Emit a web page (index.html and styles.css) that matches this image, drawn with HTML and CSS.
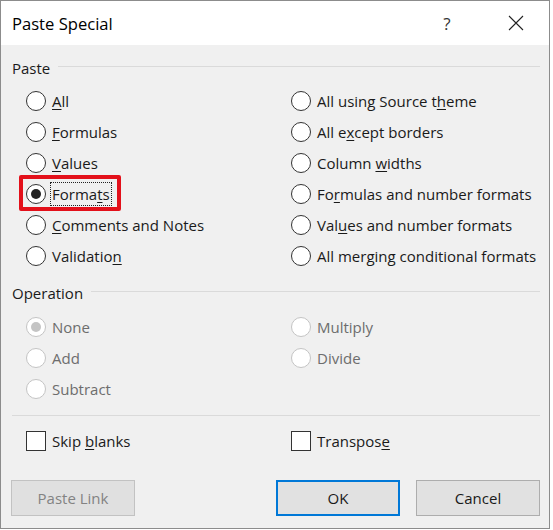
FILE: index.html
```html
<!DOCTYPE html>
<html>
<head>
<meta charset="utf-8">
<link rel="stylesheet" href="styles.css">
</head>
<body>
<div class="dialog">
  <div class="titlebar">
    <div class="title">Paste Special</div>
    <div class="help">?</div>
    <div class="close">
      <svg width="16" height="16" viewBox="0 0 16 16"><path d="M1 1 L15 15 M15 1 L1 15" stroke="#222" stroke-width="1.1" fill="none"/></svg>
    </div>
  </div>
  <div class="content">
    <div class="group-head"><span class="group-label">Paste</span><span class="group-line"></span></div>
    <div class="options">
      <div class="opt"><span class="radio"></span><span class="lbl"><u>A</u>ll</span></div>
      <div class="opt"><span class="radio"></span><span class="lbl">All using Source t<u>h</u>eme</span></div>
      <div class="opt"><span class="radio"></span><span class="lbl"><u>F</u>ormulas</span></div>
      <div class="opt"><span class="radio"></span><span class="lbl">All e<u>x</u>cept borders</span></div>
      <div class="opt"><span class="radio"></span><span class="lbl"><u>V</u>alues</span></div>
      <div class="opt"><span class="radio"></span><span class="lbl">Column <u>w</u>idths</span></div>
      <div class="opt highlight"><span class="radio checked"></span><span class="lbl focus">Forma<u>t</u>s</span></div>
      <div class="opt"><span class="radio"></span><span class="lbl">Fo<u>r</u>mulas and number formats</span></div>
      <div class="opt"><span class="radio"></span><span class="lbl"><u>C</u>omments and Notes</span></div>
      <div class="opt"><span class="radio"></span><span class="lbl">Val<u>u</u>es and number formats</span></div>
      <div class="opt"><span class="radio"></span><span class="lbl">Validatio<u>n</u></span></div>
      <div class="opt"><span class="radio"></span><span class="lbl">All mer<u>g</u>ing conditional formats</span></div>
    </div>
    <div class="group-head op-head"><span class="group-label">Operation</span><span class="group-line"></span></div>
    <div class="options disabled">
      <div class="opt"><span class="radio checked"></span><span class="lbl">None</span></div>
      <div class="opt"><span class="radio"></span><span class="lbl">Multiply</span></div>
      <div class="opt"><span class="radio"></span><span class="lbl">Add</span></div>
      <div class="opt"><span class="radio"></span><span class="lbl">Divide</span></div>
      <div class="opt"><span class="radio"></span><span class="lbl">Subtract</span></div>
    </div>
    <div class="separator"></div>
    <div class="options checks">
      <div class="opt"><span class="check"></span><span class="lbl">Skip <u>b</u>lanks</span></div>
      <div class="opt"><span class="check"></span><span class="lbl">Transpos<u>e</u></span></div>
    </div>
    <div class="buttons">
      <button class="btn btn-disabled">Paste Link</button>
      <span class="spacer"></span>
      <button class="btn btn-default">OK</button>
      <button class="btn">Cancel</button>
    </div>
  </div>
</div>
</body>
</html>
```

FILE: styles.css
```css
html, body {
  margin: 0;
  padding: 0;
  background: #ffffff;
}
body {
  font-family: "Open Sans", "Noto Sans", "Liberation Sans", sans-serif;
  font-size: 15px;
  color: #1a1a1a;
}
.dialog {
  width: 548px;
  height: 527px;
  border: 1px solid #8c8c8c;
  display: flex;
  flex-direction: column;
  background: #f0f0f0;
}
.titlebar {
  height: 44px;
  background: #ffffff;
  display: flex;
  align-items: center;
}
.title {
  flex: 1;
  padding-left: 11px;
  font-size: 16.6px;
  color: #000;
}
.help {
  width: 20px;
  text-align: center;
  font-size: 17px;
  color: #333;
  margin-right: 51px;
}
.close {
  width: 16px;
  height: 16px;
  margin-right: 25px;
  display: flex;
}
.content {
  flex: 1;
  padding: 13px 9px 0 10px;
  display: flex;
  flex-direction: column;
}
.group-head {
  height: 20px;
  display: flex;
  align-items: center;
  padding-left: 1px;
}
.group-label {
  color: #1a1a1a;
  margin-right: 8px;
}
.group-line {
  flex: 1;
  border-top: 1px solid #dadada;
  margin-top: -3px;
}
.op-head {
  margin-top: 12px;
}
.options {
  display: grid;
  grid-template-columns: 265px 1fr;
  padding-left: 15px;
  margin-top: 7px;
}
.options.disabled {
  margin-top: 8px;
}
.opt {
  height: 31px;
  display: flex;
  align-items: center;
  position: relative;
}
.radio {
  width: 18px;
  height: 18px;
  border: 1px solid #333;
  border-radius: 50%;
  background: #fff;
  display: flex;
  align-items: center;
  justify-content: center;
  flex: none;
}
.radio.checked::after {
  content: "";
  width: 10px;
  height: 10px;
  border-radius: 50%;
  background: #222;
}
.lbl {
  margin-left: 4px;
  white-space: nowrap;
  border: 1px solid transparent;
  padding: 0 1px;
  line-height: 22px;
}
.lbl u {
  text-decoration-thickness: 1px;
  text-underline-offset: 2px;
}
.focus {
  border: 1px dotted #222;
}
.highlight::before {
  content: "";
  position: absolute;
  left: -7px;
  top: -3px;
  width: 94px;
  height: 28px;
  border: 4px solid #e3101a;
  border-radius: 2px;
}
.disabled .radio {
  border-color: #c4c4c4;
}
.disabled .radio.checked::after {
  background: #c4c4c4;
}
.disabled .lbl {
  color: #6d6d6d;
}
.separator {
  border-top: 1px solid #dadada;
  margin: 11px 0 0 1px;
}
.options.checks {
  margin-top: 9px;
}
.check {
  width: 18px;
  height: 18px;
  border: 1px solid #333;
  background: #fff;
  flex: none;
}
.buttons {
  display: flex;
  margin-top: 24px;
}
.spacer {
  flex: 1;
}
.btn {
  width: 124px;
  height: 36px;
  font-family: inherit;
  font-size: 15px;
  color: #1a1a1a;
  background: #e1e1e1;
  border: 1px solid #adadad;
  border-radius: 0;
  padding: 0;
  margin: 0;
}
.btn-default {
  border: 2px solid #0078d7;
  margin-right: 16px;
}
.btn-disabled {
  background: #e0e0e0;
  border-color: #c2c2c2;
  color: #838383;
}
```
